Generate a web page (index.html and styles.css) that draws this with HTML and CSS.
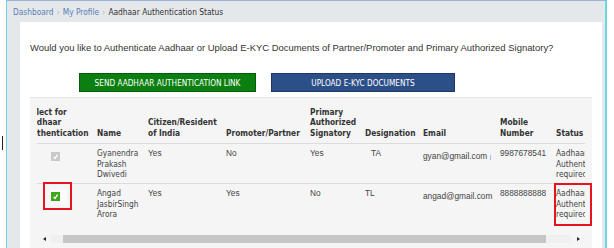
FILE: index.html
```html
<!DOCTYPE html>
<html>
<head>
<meta charset="utf-8">
<link rel="stylesheet" href="styles.css">
</head>
<body>
<div class="screen">
  <span class="caret"></span>
  <div class="frame">
    <nav class="crumbs">
      <a class="crumb-link">Dashboard</a><span class="sep">›</span>
      <a class="crumb-link">My Profile</a><span class="sep">›</span>
      <span class="crumb-current">Aadhaar Authentication Status</span>
    </nav>
    <main class="panel">
      <p class="question">Would you like to Authenticate Aadhaar or Upload E-KYC Documents of Partner/Promoter and Primary Authorized Signatory?</p>
      <div class="actions">
        <button class="btn btn-green">SEND AADHAAR AUTHENTICATION LINK</button>
        <button class="btn btn-blue">UPLOAD E-KYC DOCUMENTS</button>
      </div>
      <div class="grid-box">
        <div class="scroller">
          <table class="grid">
            <colgroup>
              <col class="c-sel"><col class="c-name"><col class="c-cit"><col class="c-pro"><col class="c-pri"><col class="c-des"><col class="c-email"><col class="c-mob"><col class="c-stat">
            </colgroup>
            <thead>
              <tr>
                <th>Select for Aadhaar Authentication</th>
                <th>Name</th>
                <th>Citizen/Resident of India</th>
                <th>Promoter/Partner</th>
                <th>Primary Authorized Signatory</th>
                <th>Designation</th>
                <th>Email</th>
                <th>Mobile Number</th>
                <th>Status</th>
              </tr>
            </thead>
            <tbody>
              <tr class="row-first">
                <td><span class="chk chk-off"><svg viewBox="0 0 9 9" width="9" height="9"><path d="M2.6 4.9 L4 6.4 L6.6 2.6" fill="none" stroke="#fff" stroke-width="1.3"/></svg></span></td>
                <td class="tah">Gyanendra Prakash Dwivedi</td>
                <td>Yes</td>
                <td>No</td>
                <td>Yes</td>
                <td><span class="indent">TA</span></td>
                <td class="email">gyan@gmail.com<span class="tick"></span></td>
                <td>9987678541</td>
                <td class="tah">Aadhaar Authentication required</td>
              </tr>
              <tr>
                <td><span class="chk-wrap"><span class="chk chk-on"><svg viewBox="0 0 9 9" width="9" height="9"><path d="M2.6 4.9 L4 6.4 L6.6 2.6" fill="none" stroke="#fff" stroke-width="1.3"/></svg></span></span></td>
                <td class="tah">Angad JasbirSingh Arora</td>
                <td>Yes</td>
                <td>Yes</td>
                <td>No</td>
                <td>TL</td>
                <td class="email">angad@gmail.com</td>
                <td>8888888888</td>
                <td class="tah">Aadhaar Authentication required</td>
              </tr>
            </tbody>
          </table>
        </div>
        <div class="hscroll">
          <span class="arrow arrow-left"></span>
          <div class="track"><div class="thumb"></div></div>
          <span class="arrow arrow-right"></span>
        </div>
      </div>
    </main>
  </div>
  <div class="mark mark-check"></div>
  <div class="mark mark-status"></div>
</div>
</body>
</html>
```
FILE: styles.css
```css
html, body {
  margin: 0;
  padding: 0;
  background: #ffffff;
}
.screen {
  position: relative;
  width: 614px;
  height: 248px;
  overflow: hidden;
  font-family: "DejaVu Sans Condensed", "DejaVu Sans", sans-serif;
}
.caret {
  position: absolute;
  left: 2px;
  top: 136px;
  width: 1px;
  height: 14px;
  background: #222;
}
.frame {
  box-sizing: border-box;
  margin-left: 6px;
  width: 601px;
  height: 248px;
  border-left: 1px solid #6ad7df;
  border-right: 2px solid #6ad7df;
  border-top: 1px solid #9db2d0;
  background: #e4e8eb;
  display: flex;
  flex-direction: column;
}
.crumbs {
  height: 21px;
  display: flex;
  align-items: center;
  padding-left: 6px;
  font-size: 8.3px;
  color: #333;
}
.crumb-link {
  color: #5a7db5;
}
.sep {
  color: #b5bcc4;
  margin: 0 3px;
  font-size: 9px;
}
.crumb-current {
  color: #333;
}
.panel {
  flex: 1;
  background: #fff;
  margin: 0 3px 0 13px;
  padding: 0 10px;
  display: flex;
  flex-direction: column;
  min-height: 0;
}
.question {
  margin: 0;
  padding-top: 19px;
  font-family: "Liberation Sans", Arial, sans-serif;
  font-size: 9.45px;
  line-height: 13px;
  color: #333;
  white-space: nowrap;
}
.actions {
  display: flex;
  gap: 15px;
  margin: 19px 0 0 49px;
}
.btn {
  box-sizing: border-box;
  height: 19px;
  padding: 0;
  font-family: "DejaVu Sans Condensed", "DejaVu Sans", sans-serif;
  font-size: 8.2px;
  color: #fff;
  border: 1px solid;
  text-align: center;
  white-space: nowrap;
}
.btn-green {
  width: 177px;
  background: #0b7f10;
  border-color: #075c0b;
}
.btn-blue {
  width: 184px;
  background: #2d4f88;
  border-color: #1d3766;
}
.grid-box {
  flex: 1;
  margin-top: 5px;
  background: #f5f5f5;
  border-top: 1px solid #e6e6e6;
  padding: 0 7px;
  display: flex;
  flex-direction: column;
  min-height: 0;
}
.scroller {
  overflow: hidden;
}
.grid {
  border-collapse: collapse;
  table-layout: fixed;
  width: 600px;
  margin-left: -15px;
  font-size: 8.3px;
  line-height: 10.5px;
  color: #444;
}
.c-sel { width: 71px; }
.c-name { width: 51px; }
.c-cit { width: 78px; }
.c-pro { width: 84px; }
.c-pri { width: 55px; }
.c-des { width: 58px; }
.c-email { width: 77px; }
.c-mob { width: 56px; }
.c-stat { width: 70px; }
.grid th {
  text-align: left;
  vertical-align: bottom;
  font-weight: bold;
  color: #333;
  padding: 8.5px 4px 5px 4px;
  border-bottom: 1px solid #dcdcdc;
}
.grid td {
  vertical-align: top;
  padding: 4px 4px 3.5px 4px;
  font-family: "Liberation Sans", Arial, sans-serif;
  color: #444;
  height: 31.5px;
}
.grid td.tah {
  font-family: "DejaVu Sans Condensed", "DejaVu Sans", sans-serif;
}
.row-first td {
  border-bottom: 1px solid #dcdcdc;
}
.grid td.email {
  padding-top: 7px;
  height: 28.5px;
}
.indent {
  padding-left: 6px;
}
.tick {
  display: inline-block;
  width: 1px;
  height: 5px;
  margin-left: 3px;
  background: #9cc0e0;
  vertical-align: -1px;
}
.chk {
  display: inline-block;
  width: 9px;
  height: 9px;
  margin: 4px 0 0 25px;
  vertical-align: top;
}
.chk svg {
  display: block;
}
.chk-off {
  background: #c9c9c9;
}
.chk-wrap {
  display: inline-block;
  vertical-align: top;
  margin: 2px 0 0 24px;
  padding: 2px 7px 2px 1px;
  background: #fbfbfb;
}
.chk-wrap .chk {
  margin: 0;
}
.chk-on {
  background: #3da61d;
}
.hscroll {
  margin-top: 12px;
  height: 8px;
  display: flex;
  align-items: center;
}
.arrow {
  width: 14px;
  height: 8px;
  display: flex;
  align-items: center;
  justify-content: center;
}
.arrow::before {
  content: "";
  width: 0;
  height: 0;
  border-top: 2.5px solid transparent;
  border-bottom: 2.5px solid transparent;
}
.arrow-left::before {
  border-right: 3px solid #222;
}
.arrow-right::before {
  border-left: 3px solid #222;
}
.track {
  flex: 1;
  height: 8px;
  background: #f0f0f0;
}
.thumb {
  margin-left: 12px;
  width: 483px;
  height: 8px;
  background: #c6c6c6;
}
.mark {
  position: absolute;
  box-sizing: border-box;
  border: 2px solid #e5141e;
}
.mark-check {
  left: 43px;
  top: 182px;
  width: 29px;
  height: 28px;
}
.mark-status {
  left: 554px;
  top: 183px;
  width: 38px;
  height: 43px;
}
```
